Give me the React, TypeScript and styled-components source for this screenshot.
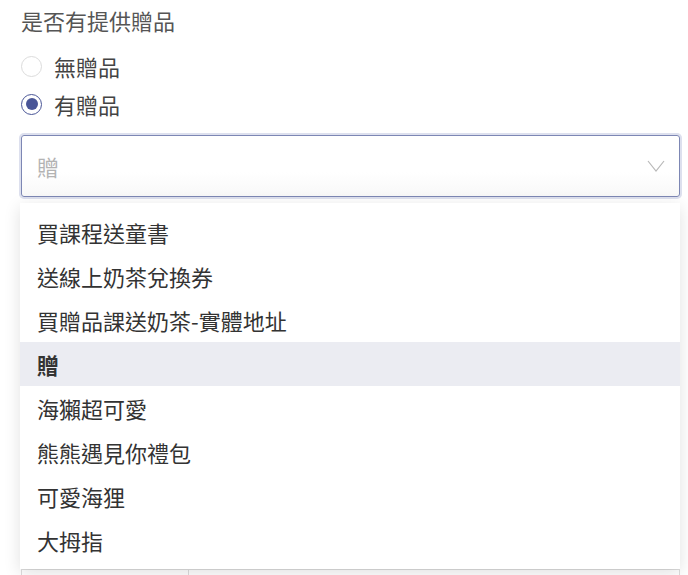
import React from 'react';
import styled, { createGlobalStyle } from 'styled-components';

const GlobalStyle = createGlobalStyle`
  body {
    margin: 0;
    background: #fff;
    font-family: "Noto Sans CJK TC", "Noto Sans", sans-serif;
    color: #444;
  }
`;

const Page = styled.div`
  padding: 6px 8px 0 21px;
  width: 688px;
  height: 575px;
  box-sizing: border-box;
  overflow: hidden;
`;

const Title = styled.div`
  font-size: 22px;
  line-height: 28px;
  color: #555;
`;

const RadioGroup = styled.div`
  display: flex;
  flex-direction: column;
  gap: 10px;
  margin-top: 18px;
`;

const RadioRow = styled.label`
  display: flex;
  align-items: center;
  gap: 12px;
  font-size: 22px;
  line-height: 28px;
  color: #444;
`;

const RadioDot = styled.span<{ $checked?: boolean }>`
  width: 21px;
  height: 21px;
  border-radius: 50%;
  box-sizing: border-box;
  border: 1px solid ${(p) => (p.$checked ? '#4a5697' : '#dcdcdc')};
  display: flex;
  align-items: center;
  justify-content: center;
  &::after {
    content: '';
    display: ${(p) => (p.$checked ? 'block' : 'none')};
    width: 12px;
    height: 12px;
    border-radius: 50%;
    background: #4a5697;
  }
`;

const SelectWrap = styled.div`
  position: relative;
  margin-top: 17px;
`;

const SelectBox = styled.div`
  height: 62px;
  box-sizing: border-box;
  border: 1px solid #7d87b4;
  border-radius: 3px;
  box-shadow: 0 0 0 2px #dde0ee;
  display: flex;
  align-items: center;
  justify-content: space-between;
  padding: 0 14px 0 15px;
  background: linear-gradient(#fff 60%, #f8f8f8);
`;

const Placeholder = styled.span`
  font-size: 22px;
  color: #b3b3b3;
`;

const Menu = styled.ul`
  position: absolute;
  top: 68px;
  left: -1px;
  right: 0;
  margin: 0;
  padding: 7px 0 7px;
  list-style: none;
  background: #fff;
  box-shadow: 0 4px 16px rgba(0, 0, 0, 0.12);
  z-index: 2;
`;

const MenuItem = styled.li<{ $active?: boolean }>`
  height: 44px;
  display: flex;
  align-items: center;
  padding-left: 17px;
  font-size: 22px;
  color: #333;
  background: ${(p) => (p.$active ? '#ebecf2' : 'transparent')};
  font-weight: ${(p) => (p.$active ? 600 : 400)};
`;

const Table = styled.div`
  margin-top: 372px;
  display: grid;
  grid-template-columns: 167px 1fr;
  border-top: 1px solid #ddd;
  border-left: 1px solid #ddd;
`;

const Cell = styled.div`
  border-right: 1px solid #ddd;
  padding: 2px 14px;
  font-size: 22px;
  line-height: 26px;
  color: #333;
`;

const items = [
  '買課程送童書',
  '送線上奶茶兌換券',
  '買贈品課送奶茶-實體地址',
  '贈',
  '海獺超可愛',
  '熊熊遇見你禮包',
  '可愛海狸',
  '大拇指',
];

export default function App() {
  return (
    <>
      <GlobalStyle />
      <Page>
        <Title>是否有提供贈品</Title>
        <RadioGroup>
          <RadioRow>
            <RadioDot />
            無贈品
          </RadioRow>
          <RadioRow>
            <RadioDot $checked />
            有贈品
          </RadioRow>
        </RadioGroup>
        <SelectWrap>
          <SelectBox>
            <Placeholder>贈</Placeholder>
            <svg width="18" height="12" viewBox="0 0 18 12" fill="none">
              <path d="M1 1l8 10 8-10" stroke="#b8b8b8" strokeWidth="1.2" />
            </svg>
          </SelectBox>
          <Menu>
            {items.map((it) => (
              <MenuItem key={it} $active={it === '贈'}>
                {it}
              </MenuItem>
            ))}
          </Menu>
        </SelectWrap>
        <Table>
          <Cell>TWD</Cell>
          <Cell />
        </Table>
      </Page>
    </>
  );
}
